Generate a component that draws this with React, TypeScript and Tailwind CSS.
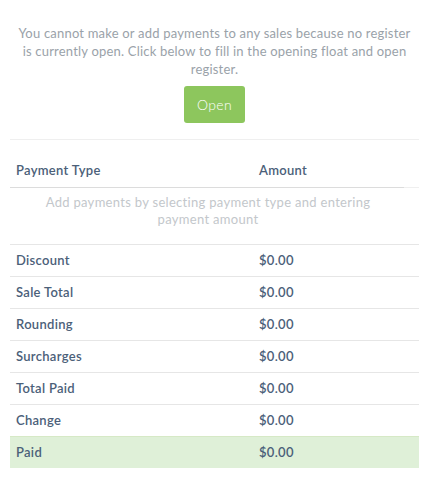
import React from 'react';

const rows = [
  { label: 'Discount', amount: '$0.00' },
  { label: 'Sale Total', amount: '$0.00' },
  { label: 'Rounding', amount: '$0.00' },
  { label: 'Surcharges', amount: '$0.00' },
  { label: 'Total Paid', amount: '$0.00' },
  { label: 'Change', amount: '$0.00' },
];

export default function App() {
  return (
    <div className="w-[429px] h-[489px] bg-white px-[10px] text-[13px] tracking-[0.3px] font-['Lato','Open_Sans',sans-serif] text-[#4b6079]">
      {/* register closed notice */}
      <div className="pt-[24px] pb-[16px] flex flex-col items-center border-b border-[#efefef]">
        <p className="text-center leading-[18px] text-[#9aa2a9] tracking-[0.2px]">
          You cannot make or add payments to any sales because no register
          <br />
          is currently open. Click below to fill in the opening float and open
          <br />
          register.
        </p>
        <button className="mt-[8px] w-[61px] h-[37px] rounded-[3px] bg-[#8dc65d] text-white text-[14px] font-light">
          Open
        </button>
      </div>

      {/* payments table */}
      <div className="mt-[15px]">
        <div className="grid grid-cols-[243px_1fr] h-[32px] items-center font-semibold">
          <span className="pl-[6px]">Payment Type</span>
          <span className="pl-[6px]">Amount</span>
        </div>
        <div className="flex h-px">
          <div className="w-[394px] bg-[#dcdcdc]" />
          <div className="flex-1 bg-[#efefef]" />
        </div>
        <p className="pt-[6px] pb-[16px] pr-[13px] text-center leading-[17px] text-[#c3c7cb]">
          Add payments by selecting payment type and entering
          <br />
          payment amount
        </p>
        {rows.map((r) => (
          <div
            key={r.label}
            className="grid grid-cols-[243px_1fr] h-[32px] items-center border-t border-[#e6e6e6] font-semibold"
          >
            <span className="pl-[6px]">{r.label}</span>
            <span className="pl-[6px]">{r.amount}</span>
          </div>
        ))}
        <div className="grid grid-cols-[243px_1fr] h-[32px] items-center border-t border-[#d6e9c6] bg-[#dff0d8] font-semibold">
          <span className="pl-[6px]">Paid</span>
          <span className="pl-[6px]">$0.00</span>
        </div>
      </div>
    </div>
  );
}
